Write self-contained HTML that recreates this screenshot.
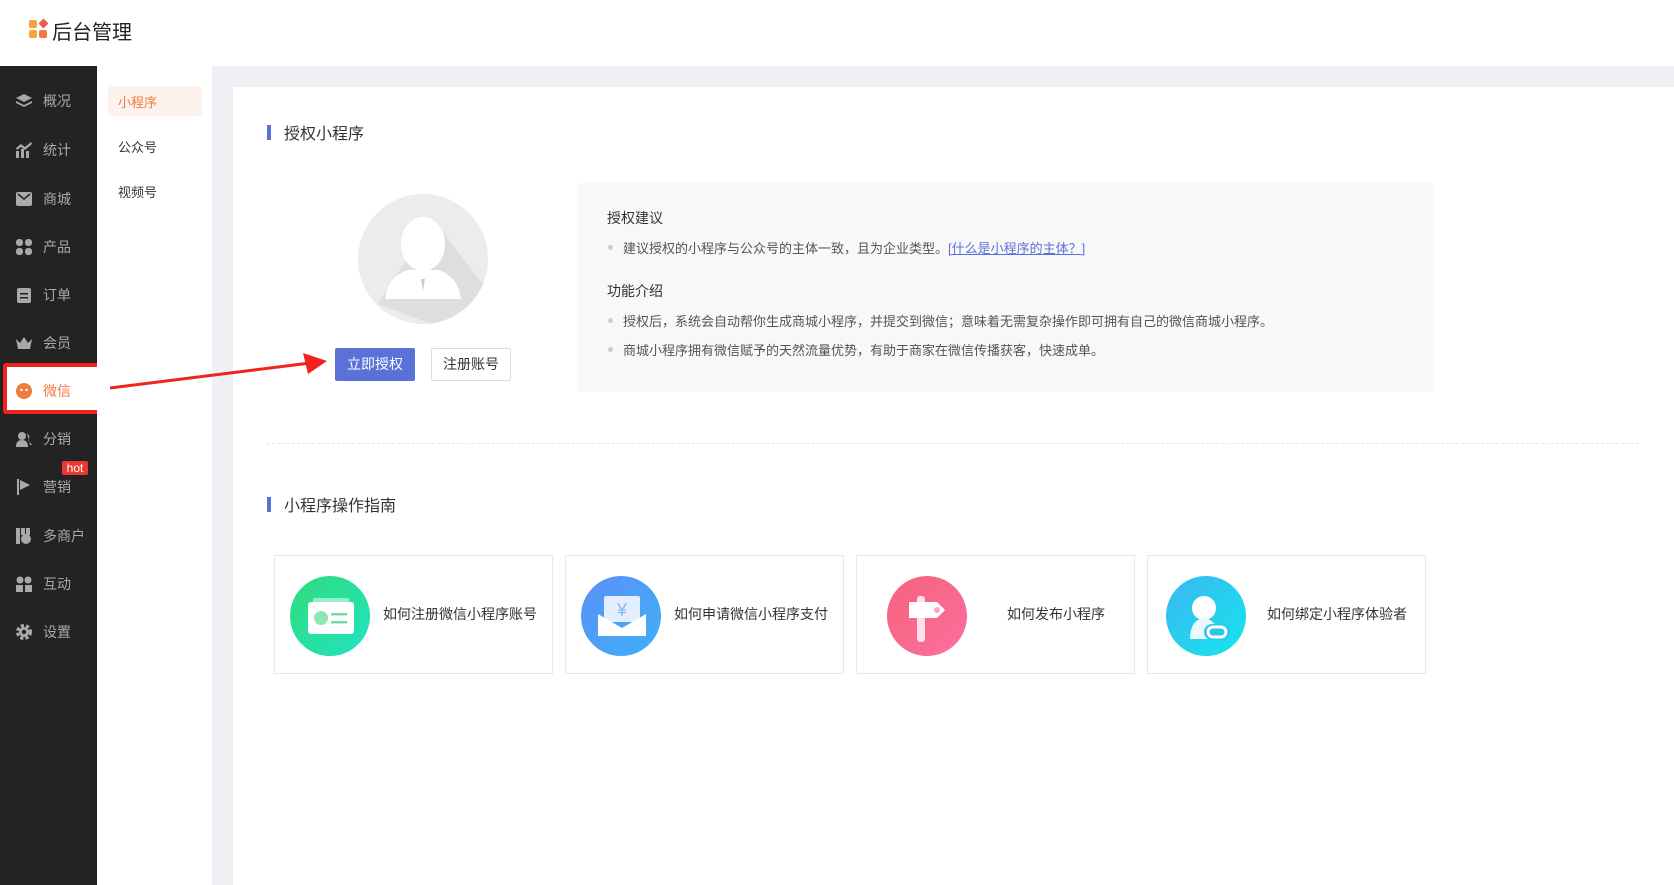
<!DOCTYPE html>
<html><head><meta charset="utf-8"><style>
*{margin:0;padding:0;box-sizing:border-box}
body{width:1674px;height:885px;overflow:hidden;background:#eef0f3;font-family:"Liberation Sans","Noto Sans CJK SC",sans-serif;color:#333;position:relative}
.abs{position:absolute}
.hdr{left:0;top:0;width:1674px;height:66px;background:#fff}
.side{left:0;top:66px;width:97px;height:819px;background:#232323}
.sub{left:97px;top:66px;width:115px;height:819px;background:#fff}
.card{left:233px;top:87px;width:1441px;height:798px;background:#fff}
.mi{position:absolute;left:0;width:97px;height:30px;color:#a9a9a9;font-size:14px;line-height:30px}
.mi svg{position:absolute;left:16px;top:7px}
.mi span{position:absolute;left:43px}
.t{position:absolute;white-space:nowrap}
.gc{position:absolute;top:555px;width:279px;height:119px;border:1px solid #e8e8e8;background:#fff}
.gc .c{position:absolute;left:15px;top:20px;width:80px;height:80px;border-radius:50%}
.gc .tx{position:absolute;top:48px;font-size:14px;color:#333;white-space:nowrap}
.bul{position:absolute;width:5px;height:5px;border-radius:50%;background:#ccc}
</style></head><body>
<div class="abs hdr"></div>
<div class="abs" style="left:29px;top:20px;width:8px;height:8px;background:#f5a33b;border-radius:2px"></div>
<div class="abs" style="left:29px;top:30px;width:8px;height:8px;background:#f5a33b;border-radius:2px"></div>
<div class="abs" style="left:39px;top:30px;width:8px;height:8px;background:#f07b3f;border-radius:2px"></div>
<div class="abs" style="left:40px;top:20px;width:7px;height:7px;background:#ef5a4e;transform:rotate(45deg)"></div>
<div class="t" style="left:52px;top:16px;font-size:20px;color:#222">后台管理</div>
<div class="abs side"></div>
<div class="mi" style="top:86px"><svg width="16" height="16" fill="#a9a9a9"><path d="M8 1 L16 5 L8 9 L0 5Z"/><path d="M0 8 L8 12 L16 8 L16 10 L8 14 L0 10Z"/></svg><span>概况</span></div>
<div class="mi" style="top:135px"><svg width="16" height="16" fill="#a9a9a9"><rect x="0" y="9" width="3" height="7"/><rect x="5" y="7" width="3" height="9"/><rect x="10" y="9" width="3" height="7"/><path d="M0 6 L5 2 L9 5 L15 0 L16 2 L9 8 L5 5 L1 8Z"/></svg><span>统计</span></div>
<div class="mi" style="top:184px"><svg width="16" height="16" fill="#a9a9a9"><rect x="0" y="1" width="16" height="14" rx="2"/><path d="M2 3 L8 8 L14 3" stroke="#232323" stroke-width="1.5" fill="none"/></svg><span>商城</span></div>
<div class="mi" style="top:232px"><svg width="16" height="16" fill="#a9a9a9"><rect x="0" y="0" width="7" height="7" rx="3"/><rect x="9" y="0" width="7" height="7" rx="3"/><rect x="0" y="9" width="7" height="7" rx="3"/><rect x="9" y="9" width="7" height="7" rx="3"/></svg><span>产品</span></div>
<div class="mi" style="top:280px"><svg width="16" height="16" fill="#a9a9a9"><rect x="1" y="1" width="14" height="15" rx="2"/><rect x="4" y="6" width="8" height="1.5" fill="#232323"/><rect x="4" y="10" width="8" height="1.5" fill="#232323"/></svg><span>订单</span></div>
<div class="mi" style="top:328px"><svg width="16" height="16" fill="#a9a9a9"><path d="M0 4 L4 8 L8 2 L12 8 L16 4 L14 14 L2 14Z"/></svg><span>会员</span></div>
<div class="abs" style="left:3px;top:363px;width:99px;height:51px;border:4px solid #f2231f;border-radius:3px;background:#fff"></div>
<div class="mi" style="top:376px;color:#f07b3f"><svg width="16" height="16"><circle cx="8" cy="8" r="8" fill="#f07b3f"/><circle cx="5.5" cy="7" r="1.2" fill="#fff"/><circle cx="10.5" cy="7" r="1.2" fill="#fff"/></svg><span>微信</span></div>
<div class="mi" style="top:424px"><svg width="16" height="16" fill="#a9a9a9"><circle cx="6" cy="5" r="4"/><path d="M0 16 Q0 9 6 9 Q12 9 12 16Z"/><path d="M11 2 Q15 5 12 9 L16 14 L14 14Z"/></svg><span>分销</span></div>
<div class="abs" style="left:62px;top:461px;width:26px;height:14px;background:#e83a2e;border-radius:2px;color:#fff;font-size:12px;line-height:14px;text-align:center">hot</div>
<div class="mi" style="top:472px"><svg width="16" height="16" fill="#a9a9a9"><rect x="1" y="0" width="2" height="16"/><path d="M4 1 L14 6 L4 11Z"/></svg><span>营销</span></div>
<div class="mi" style="top:521px"><svg width="16" height="16" fill="#a9a9a9"><rect x="0" y="0" width="4" height="16"/><rect x="5" y="0" width="4" height="7"/><rect x="10" y="0" width="4" height="7"/><circle cx="10" cy="11" r="5"/></svg><span>多商户</span></div>
<div class="mi" style="top:569px"><svg width="16" height="16" fill="#a9a9a9"><circle cx="4" cy="4" r="3.5"/><circle cx="12" cy="4" r="3.5"/><rect x="0" y="9" width="7" height="7"/><rect x="9" y="9" width="7" height="7"/></svg><span>互动</span></div>
<div class="mi" style="top:617px"><svg width="16" height="16"><circle cx="8" cy="8" r="6" fill="none" stroke="#a9a9a9" stroke-width="4" stroke-dasharray="3 2"/><circle cx="8" cy="8" r="5" fill="#a9a9a9"/><circle cx="8" cy="8" r="2.2" fill="#232323"/></svg><span>设置</span></div>
<div class="abs sub"></div>
<div class="abs" style="left:108px;top:86px;width:94px;height:30px;background:#fdf3ec;border-radius:3px"></div>
<div class="t" style="left:118px;top:92px;font-size:13px;color:#f07b3f">小程序</div>
<div class="t" style="left:118px;top:137px;font-size:13px;color:#333">公众号</div>
<div class="t" style="left:118px;top:182px;font-size:13px;color:#333">视频号</div>
<div class="abs card"></div>
<svg class="abs" style="left:100px;top:350px" width="240" height="45"><line x1="10" y1="38" x2="210" y2="13" stroke="#f2231f" stroke-width="3"/><polygon points="227,11 203,3 208,24" fill="#f2231f"/></svg>
<div class="abs" style="left:267px;top:125px;width:4px;height:15px;background:#5a72d8"></div>
<div class="t" style="left:284px;top:120px;font-size:16px;color:#333">授权小程序</div>
<svg class="abs" style="left:358px;top:194px" width="130" height="130"><defs><clipPath id="cp"><circle cx="65" cy="65" r="65"/></clipPath></defs><circle cx="65" cy="65" r="65" fill="#ececec"/><polygon points="75,25 140,110 100,140 20,110" fill="#dedede" clip-path="url(#cp)"/><ellipse cx="65" cy="50" rx="22" ry="27" fill="#fff"/><path d="M27 105 Q30 82 50 76 L80 76 Q100 82 103 105 Z" fill="#fff"/><path d="M63 85 l2 12 l2-12z" fill="#ccc"/></svg>
<div class="abs" style="left:335px;top:348px;width:80px;height:33px;background:#5a72d8;border-radius:2px;color:#fff;font-size:14px;line-height:33px;text-align:center">立即授权</div>
<div class="abs" style="left:431px;top:348px;width:80px;height:33px;border:1px solid #ddd;border-radius:2px;color:#333;font-size:14px;line-height:31px;text-align:center">注册账号</div>
<div class="abs" style="left:578px;top:183px;width:855px;height:209px;background:#f8f8f8"></div>
<div class="t" style="left:607px;top:208px;font-size:14px;color:#333">授权建议</div>
<div class="bul" style="left:608px;top:245px"></div>
<div class="t" style="left:623px;top:238px;font-size:13px;color:#555">建议授权的小程序与公众号的主体一致，且为企业类型。<span style="color:#5a72d8;text-decoration:underline">[什么是小程序的主体？]</span></div>
<div class="t" style="left:607px;top:281px;font-size:14px;color:#333">功能介绍</div>
<div class="bul" style="left:608px;top:318px"></div>
<div class="t" style="left:623px;top:311px;font-size:13px;color:#555">授权后，系统会自动帮你生成商城小程序，并提交到微信；意味着无需复杂操作即可拥有自己的微信商城小程序。</div>
<div class="bul" style="left:608px;top:347px"></div>
<div class="t" style="left:623px;top:340px;font-size:13px;color:#555">商城小程序拥有微信赋予的天然流量优势，有助于商家在微信传播获客，快速成单。</div>
<div class="abs" style="left:267px;top:443px;width:1372px;border-top:1px dashed #e6e6e6"></div>
<div class="abs" style="left:267px;top:497px;width:4px;height:15px;background:#5a72d8"></div>
<div class="t" style="left:284px;top:492px;font-size:16px;color:#333">小程序操作指南</div>
<div class="gc" style="left:274px"><div class="c" style="background:linear-gradient(135deg,#2fdc7a,#22e3c2)"></div>
<svg class="abs" style="left:33px;top:40px" width="46" height="40"><rect x="5" y="2" width="36" height="6" rx="2" fill="#fff" opacity=".5"/><rect x="0" y="6" width="46" height="32" rx="3" fill="#fff"/><circle cx="13" cy="22" r="7" fill="#8fe6b0"/><rect x="23" y="17" width="16" height="2.5" fill="#6ee0a6"/><rect x="23" y="25" width="16" height="2.5" fill="#6ee0a6"/></svg>
<div class="tx" style="left:108px">如何注册微信小程序账号</div></div>
<div class="gc" style="left:565px"><div class="c" style="background:linear-gradient(135deg,#5b8ff7,#3fb1f6)"></div>
<svg class="abs" style="left:32px;top:38px" width="48" height="44"><rect x="6" y="2" width="36" height="26" rx="2" fill="#e3eefe"/><text x="24" y="22" font-size="18" text-anchor="middle" fill="#8cb6f7" font-family="Liberation Sans">¥</text><path d="M0 20 L24 34 L48 20 L48 42 L0 42Z" fill="#fff"/></svg>
<div class="tx" style="left:108px">如何申请微信小程序支付</div></div>
<div class="gc" style="left:856px"><div class="c" style="left:30px;background:linear-gradient(135deg,#f7627a,#fb70a0)"></div>
<svg class="abs" style="left:50px;top:40px" width="42" height="48"><rect x="10" y="0" width="8" height="46" rx="3" fill="#fde2ec"/><path d="M2 6 H30 L38 14 L30 22 H2Z" fill="#fff"/><circle cx="30" cy="14" r="3" fill="#f5a8bf"/></svg>
<div class="tx" style="left:150px">如何发布小程序</div></div>
<div class="gc" style="left:1147px"><div class="c" style="left:18px;background:linear-gradient(135deg,#3ab6f2,#16e6ec)"></div>
<svg class="abs" style="left:36px;top:38px" width="50" height="50"><circle cx="20" cy="14" r="12" fill="#fff"/><path d="M6 45 Q6 26 20 24 Q34 26 34 45Z" fill="#e8f8fd"/><rect x="20" y="30" width="26" height="16" rx="8" fill="#27c7ee"/><rect x="24" y="33" width="18" height="10" rx="5" fill="none" stroke="#fff" stroke-width="3"/></svg>
<div class="tx" style="left:119px">如何绑定小程序体验者</div></div>
</body></html>
